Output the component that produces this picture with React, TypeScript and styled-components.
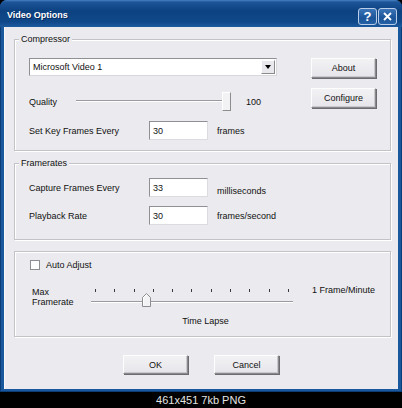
import styled, { createGlobalStyle } from 'styled-components'

const GlobalStyle = createGlobalStyle`
  html, body { margin: 0; padding: 0; background: #000; }
  body {
    font-family: "Liberation Sans", Arial, sans-serif;
    font-size: 9px;
    color: #111;
  }
`

const FACE = '#ebeaee'

const Screen = styled.div`
  width: 402px;
  height: 408px;
  background: #000;
  display: flex;
  flex-direction: column;
`

const Window = styled.div`
  height: 392px;
  flex-shrink: 0;
  display: flex;
  flex-direction: column;
  background: #1a589d;
  border-radius: 7px 7px 0 0;
  box-shadow: inset 0 0 0 1px #0d3d76;
  overflow: hidden;
`

const TitleBar = styled.div`
  height: 27px;
  flex-shrink: 0;
  box-sizing: border-box;
  display: flex;
  align-items: center;
  padding: 2px 5px 0 7px;
  background: linear-gradient(
    180deg,
    #4a82c4 0px,
    #1d5599 2px,
    #0d4281 40%,
    #0f4889 80%,
    #1c5a9f 100%
  );
`

const Title = styled.span`
  flex: 1;
  color: #fff;
  font-weight: bold;
  font-size: 9px;
  text-shadow: 1px 1px 0 #08295a;
`

const TitleButtons = styled.div`
  display: flex;
  gap: 1px;
  margin-top: 3px;
`

const TitleButton = styled.div`
  width: 19px;
  height: 17px;
  box-sizing: border-box;
  border: 1px solid #b9cde8;
  border-radius: 3px;
  background: linear-gradient(180deg, #3c74b8 0%, #1c5499 60%, #2461a6 100%);
  display: flex;
  align-items: center;
  justify-content: center;
  color: #fff;
  font-weight: bold;
  font-size: 13px;
  line-height: 1;
`

const Body = styled.div`
  flex: 1;
  margin: 0 4px 3px 4px;
  padding: 12px 7px 0 10px;
  background: ${FACE};
  box-shadow: inset 1px 0 0 #f8f8fa;
  display: flex;
  flex-direction: column;
`

const Group = styled.div<{ $pad: string; $gap?: number }>`
  position: relative;
  border: 1px solid #c4c2c7;
  box-shadow: 1px 1px 0 #fff, inset 1px 1px 0 #fff;
  padding: ${p => p.$pad};
  margin-bottom: ${p => p.$gap ?? 0}px;
`

const Legend = styled.span`
  position: absolute;
  top: -6px;
  left: 4px;
  padding: 0 2px;
  line-height: 11px;
  background: ${FACE};
`

const CompressorGrid = styled.div`
  display: grid;
  grid-template-columns: 248px 1fr;
`

const Column = styled.div`
  display: flex;
  flex-direction: column;
`

const SideButtons = styled.div`
  display: flex;
  flex-direction: column;
  align-items: flex-end;
  gap: 10px;
`

const Button = styled.div<{ $h?: number }>`
  width: 65px;
  height: ${p => p.$h ?? 19}px;
  box-sizing: border-box;
  display: flex;
  align-items: center;
  justify-content: center;
  background: linear-gradient(180deg, #f2f1f4 0%, #e6e5e9 100%);
  border: 1px solid;
  border-color: #fdfdfd #8a8a8d #8a8a8d #fdfdfd;
  box-shadow: 1px 1px 0 #6c6c70, inset -1px -1px 0 #c9c8cc;
`

const Select = styled.div`
  height: 18px;
  box-sizing: border-box;
  display: flex;
  align-items: center;
  background: #fff;
  border: 1px solid;
  border-color: #8f9095 #d8d8dc #d8d8dc #8f9095;
  padding-left: 3px;
`

const SelectText = styled.span`
  flex: 1;
`

const SelectArrow = styled.div`
  width: 14px;
  height: 14px;
  margin-right: 1px;
  box-sizing: border-box;
  display: flex;
  align-items: center;
  justify-content: center;
  background: #e9e8ec;
  border: 1px solid;
  border-color: #fdfdfd #8a8a8d #8a8a8d #fdfdfd;

  &::after {
    content: '';
    border-left: 3.5px solid transparent;
    border-right: 3.5px solid transparent;
    border-top: 4px solid #000;
  }
`

const Row = styled.div<{ $top?: number }>`
  display: flex;
  align-items: center;
  height: 19px;
  margin-top: ${p => p.$top ?? 0}px;
`

const Label = styled.span<{ $w: number }>`
  width: ${p => p.$w}px;
  flex-shrink: 0;
`

const Input = styled.div`
  width: 59px;
  height: 19px;
  box-sizing: border-box;
  display: flex;
  align-items: center;
  padding-left: 3px;
  background: #fff;
  border: 1px solid;
  border-color: #8f9095 #dcdce0 #dcdce0 #8f9095;
`

const Unit = styled.span<{ $drop?: number }>`
  margin-left: 9px;
  padding-top: ${p => p.$drop ?? 0}px;
`

const Track = styled.div<{ $w: number }>`
  position: relative;
  width: ${p => p.$w}px;
  height: 19px;

  &::before {
    content: '';
    position: absolute;
    left: 0;
    right: 0;
    top: 8px;
    height: 1px;
    background: #9b9b9f;
    border-bottom: 1px solid #fff;
  }
`

const RectThumb = styled.div`
  position: absolute;
  right: 0;
  top: 0;
  width: 9px;
  height: 19px;
  box-sizing: border-box;
  background: #f2f2f4;
  border: 1px solid;
  border-color: #fff #8d8d90 #8d8d90 #fff;
`

const Value = styled.span`
  margin-left: 15px;
`

const FrameRows = styled.div`
  display: flex;
  flex-direction: column;
  gap: 9px;
`

const CheckRow = styled.label`
  display: flex;
  align-items: center;
  gap: 6px;
  height: 10px;
  padding-left: 1px;
`

const Checkbox = styled.span`
  width: 10px;
  height: 10px;
  box-sizing: border-box;
  background: #fff;
  border: 1px solid #8e8f93;
`

const RateRow = styled.div`
  display: flex;
  align-items: flex-start;
  height: 22px;
  margin-top: 16px;
`

const TwoLine = styled.span`
  width: 59px;
  padding: 1px 0 0 3px;
  line-height: 10px;
`

const TickSlider = styled.div`
  position: relative;
  width: 202px;
  height: 22px;
  flex-shrink: 0;
`

const Ticks = styled.div`
  position: absolute;
  left: 4px;
  right: 4px;
  top: 3px;
  display: flex;
  justify-content: space-between;
`

const Tick = styled.span`
  width: 1px;
  height: 3px;
  background: #3a3a3e;
`

const TickTrack = styled.div`
  position: absolute;
  left: 0;
  right: 0;
  top: 15px;
  height: 1px;
  background: #9b9b9f;
  border-bottom: 1px solid #fff;
`

const PointerThumb = styled.svg`
  position: absolute;
  left: 51px;
  top: 7px;
`

const EndLabel = styled.span`
  margin: -1px 0 0 19px;
  line-height: 10px;
`

const Caption = styled.div`
  margin-top: 8px;
  padding-left: 6px;
  line-height: 10px;
  text-align: center;
`

const DialogButtons = styled.div`
  display: flex;
  justify-content: center;
  gap: 26px;
  margin-top: 18px;
  padding-right: 3px;
`

const ImageInfo = styled.div`
  flex: 1;
  display: flex;
  align-items: center;
  justify-content: center;
  color: #e4e4e4;
  font-size: 11px;
`

export default function App() {
  return (
    <Screen>
      <GlobalStyle />
      <Window>
        <TitleBar>
          <Title>Video Options</Title>
          <TitleButtons>
            <TitleButton>?</TitleButton>
            <TitleButton>
              <svg width="9" height="9" viewBox="0 0 9 9">
                <path d="M1 1 L8 8 M8 1 L1 8" stroke="#fff" strokeWidth="1.8" />
              </svg>
            </TitleButton>
          </TitleButtons>
        </TitleBar>

        <Body>
          <Group $pad="18px 14px 10px 14px" $gap={12}>
            <Legend>Compressor</Legend>
            <CompressorGrid>
              <Column>
                <Select>
                  <SelectText>Microsoft Video 1</SelectText>
                  <SelectArrow />
                </Select>
                <Row $top={16}>
                  <Label $w={47}>Quality</Label>
                  <Track $w={155}>
                    <RectThumb />
                  </Track>
                  <Value>100</Value>
                </Row>
                <Row $top={10}>
                  <Label $w={120}>Set Key Frames Every</Label>
                  <Input>30</Input>
                  <Unit>frames</Unit>
                </Row>
              </Column>
              <SideButtons>
                <Button $h={20}>About</Button>
                <Button $h={20}>Configure</Button>
              </SideButtons>
            </CompressorGrid>
          </Group>

          <Group $pad="14px 14px 14px 14px" $gap={11}>
            <Legend>Framerates</Legend>
            <FrameRows>
              <Row>
                <Label $w={120}>Capture Frames Every</Label>
                <Input>33</Input>
                <Unit $drop={6}>milliseconds</Unit>
              </Row>
              <Row>
                <Label $w={120}>Playback Rate</Label>
                <Input>30</Input>
                <Unit>frames/second</Unit>
              </Row>
            </FrameRows>
          </Group>

          <Group $pad="8px 14px 10px 14px">
            <CheckRow>
              <Checkbox />
              Auto Adjust
            </CheckRow>
            <RateRow>
              <TwoLine>
                Max
                <br />
                Framerate
              </TwoLine>
              <TickSlider>
                <Ticks>
                  {Array.from({ length: 11 }, (_, i) => (
                    <Tick key={i} />
                  ))}
                </Ticks>
                <TickTrack />
                <PointerThumb width="9" height="14" viewBox="0 0 9 14">
                  <polygon
                    points="0.5,4.5 4.5,0.5 8.5,4.5 8.5,13.5 0.5,13.5"
                    fill="#f3f3f5"
                    stroke="#8d8d90"
                  />
                  <path d="M1.5 4.8 L4.5 1.8 M1.5 4.8 V12.5" stroke="#fff" />
                </PointerThumb>
              </TickSlider>
              <EndLabel>1 Frame/Minute</EndLabel>
            </RateRow>
            <Caption>Time Lapse</Caption>
          </Group>

          <DialogButtons>
            <Button>OK</Button>
            <Button>Cancel</Button>
          </DialogButtons>
        </Body>
      </Window>
      <ImageInfo>461x451 7kb PNG</ImageInfo>
    </Screen>
  )
}
